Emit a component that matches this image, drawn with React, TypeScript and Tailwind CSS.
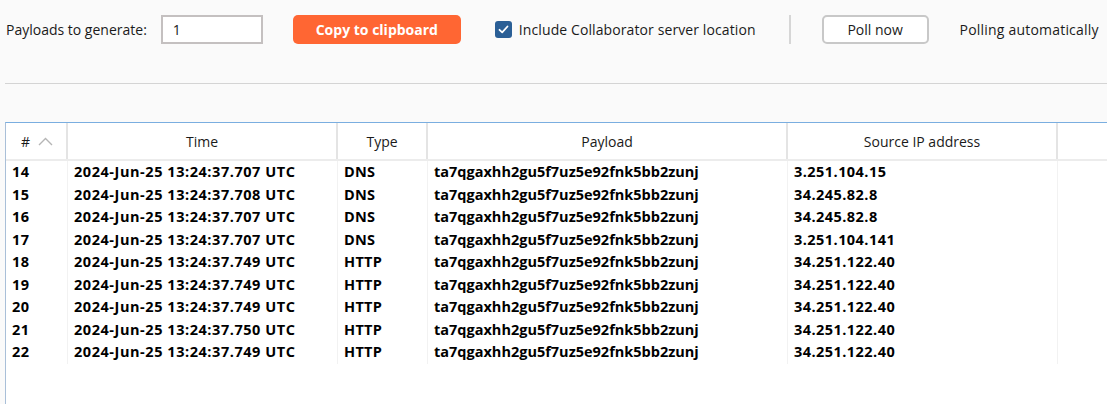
import React from 'react';

const rows = [
  ['14', '2024-Jun-25 13:24:37.707 UTC', 'DNS', '3.251.104.15'],
  ['15', '2024-Jun-25 13:24:37.708 UTC', 'DNS', '34.245.82.8'],
  ['16', '2024-Jun-25 13:24:37.707 UTC', 'DNS', '34.245.82.8'],
  ['17', '2024-Jun-25 13:24:37.707 UTC', 'DNS', '3.251.104.141'],
  ['18', '2024-Jun-25 13:24:37.749 UTC', 'HTTP', '34.251.122.40'],
  ['19', '2024-Jun-25 13:24:37.749 UTC', 'HTTP', '34.251.122.40'],
  ['20', '2024-Jun-25 13:24:37.749 UTC', 'HTTP', '34.251.122.40'],
  ['21', '2024-Jun-25 13:24:37.750 UTC', 'HTTP', '34.251.122.40'],
  ['22', '2024-Jun-25 13:24:37.749 UTC', 'HTTP', '34.251.122.40'],
];

const payload = 'ta7qgaxhh2gu5f7uz5e92fnk5bb2zunj';
const cols = 'grid grid-cols-[62px_270px_90px_360px_270px_1fr]';

export default function App() {
  return (
    <div className="h-[404px] w-[1107px] overflow-hidden bg-[#fafafa] font-['Open_Sans',sans-serif] text-[14px] text-[#1a1a1a]">
      {/* toolbar */}
      <div className="mt-[15px] flex h-[29px] items-center whitespace-nowrap">
        <span className="ml-[6px]">Payloads to generate:</span>
        <div className="ml-[14px] flex h-[29px] w-[102px] items-center border-2 border-[#c4c0c0] bg-white pl-[10px]">1</div>
        <button className="ml-[30px] h-[29px] w-[168px] rounded-[5px] bg-[#ff6633] font-bold text-white">
          Copy to clipboard
        </button>
        <div className="ml-[34px] flex items-center">
          <span className="flex h-[17px] w-[17px] items-center justify-center rounded-[3px] bg-[#2a5f96]">
            <svg width="11" height="9" viewBox="0 0 11 9" fill="none">
              <path d="M1.5 4.8 L4.2 7.3 L9.5 1.5" stroke="white" strokeWidth="1.8" strokeLinecap="round" strokeLinejoin="round" />
            </svg>
          </span>
          <span className="ml-[7px] tracking-[0.1px]">Include Collaborator server location</span>
        </div>
        <div className="ml-[33px] h-[29px] w-[2px] bg-[#d6d6d6]" />
        <button className="ml-[31px] h-[29px] w-[107px] rounded-[5px] border-2 border-[#c8c8c8] bg-white">
          Poll now
        </button>
        <span className="ml-[31px] tracking-[0.2px]">Polling automatically</span>
      </div>

      <div className="ml-[5px] mt-[39px] h-px bg-[#d4d4d4]" />

      {/* table */}
      <div className="ml-[5px] mt-[38px] h-[300px] border-l border-t border-l-[#a9bfd8] border-t-[#7aaee0] bg-white">
        <div className={`${cols} h-[38px] border-b-2 border-[#ececec]`}>
          <div className="flex items-center justify-center gap-[8px] border-r-2 border-[#e4e4e4] pl-[2px]">
            <span>#</span>
            <svg width="15" height="9" viewBox="0 0 15 9" fill="none">
              <path d="M1 8 L7.5 1.5 L14 8" stroke="#b5b5b5" strokeWidth="1.4" />
            </svg>
          </div>
          <div className="flex items-center justify-center border-r-2 border-[#e4e4e4]">Time</div>
          <div className="flex items-center justify-center border-r-2 border-[#e4e4e4]">Type</div>
          <div className="flex items-center justify-center border-r-2 border-[#e4e4e4]">Payload</div>
          <div className="flex items-center justify-center border-r-2 border-[#e4e4e4]">Source IP address</div>
          <div />
        </div>
        {rows.map((r) => (
          <div key={r[0]} className={`${cols} h-[22.5px] text-[14.5px] font-bold text-black`}>
            <div className="flex items-center border-r border-[#f2f2f2] pl-[6px] tracking-[0.4px]">{r[0]}</div>
            <div className="flex items-center border-r border-[#f2f2f2] pl-[6px] tracking-[0.55px]">{r[1]}</div>
            <div className="flex items-center border-r border-[#f2f2f2] pl-[6px] tracking-[0.3px]">{r[2]}</div>
            <div className="flex items-center border-r border-[#f2f2f2] pl-[6px]">{payload}</div>
            <div className="flex items-center border-r border-[#f2f2f2] pl-[6px] tracking-[0.45px]">{r[3]}</div>
            <div />
          </div>
        ))}
      </div>
    </div>
  );
}
